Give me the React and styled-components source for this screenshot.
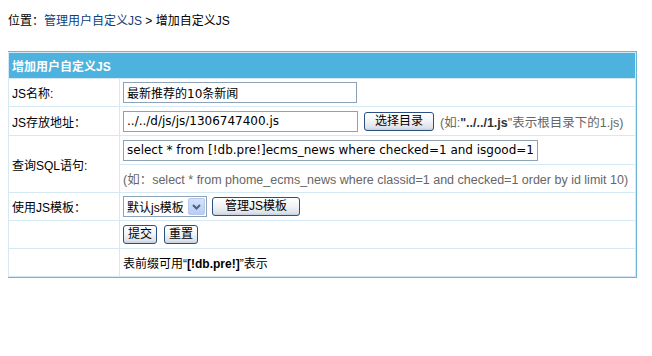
import React from 'react'
import styled, { createGlobalStyle } from 'styled-components'

const GlobalStyle = createGlobalStyle`
  body {
    margin: 8px;
    background: #fff;
    color: #000;
    font: 12px 'Liberation Sans', 'Noto Sans CJK SC', sans-serif;
    text-autospace: no-autospace;
  }
`

const Breadcrumb = styled.div`
  height: 26px;
  line-height: 26px;
  margin-bottom: 17px;
`

const Link = styled.a`
  color: #0d3f7a;
  text-decoration: none;
`

const Panel = styled.div`
  box-sizing: border-box;
  width: 630px;
  margin-left: -1px;
  border: 1px solid #6db5d6;
  padding: 1px;
  background: #d5e9f4;
  display: grid;
  grid-template-columns: 110px 1fr;
  grid-template-rows: 25px 27px 28px 28px 27px 27px 27px 27px;
  gap: 1px;
`

const Header = styled.div`
  grid-column: 1 / span 2;
  background: #4db2dd;
  color: #fff;
  font-weight: bold;
  display: flex;
  align-items: center;
  padding-left: 3px;
`

const Label = styled.div`
  background: #fff;
  display: flex;
  align-items: center;
  padding-left: 3px;
  grid-row: ${({ span }) => (span ? `span ${span}` : 'auto')};
`

const Cell = styled.div`
  background: #fff;
  display: flex;
  align-items: center;
  gap: ${({ gap }) => gap || 6}px;
  padding-left: 3px;
  white-space: nowrap;
`

const TextInput = styled.input`
  box-sizing: border-box;
  width: ${({ w }) => w}px;
  height: 21px;
  border: 1px solid #8da2b7;
  padding: 0 3px;
  font: 12px 'DejaVu Sans', 'Noto Sans CJK SC', sans-serif;
  color: #000;
  outline: none;
`

const Button = styled.button`
  box-sizing: border-box;
  height: 19px;
  padding: 0 ${({ pad }) => pad || 5}px;
  border: 1px solid #2b4f80;
  border-radius: 3px;
  background: linear-gradient(180deg, #ffffff 0%, #f3f4f6 45%, #dde3ec 85%, #c5cfdd 100%);
  font: 12px 'Liberation Sans', 'Noto Sans CJK SC', sans-serif;
  color: #000;
  line-height: 17px;
  cursor: pointer;
`

const Hint = styled.span`
  color: #666;
  font-size: 12.5px;
  white-space: nowrap;
  b {
    color: #333;
  }
`

const Note = styled.span`
  white-space: nowrap;
`

const SelectBox = styled.div`
  box-sizing: border-box;
  width: 84px;
  height: 21px;
  border: 1px solid #8da2b7;
  display: flex;
  align-items: stretch;
  background: #fff;
`

const SelectText = styled.span`
  flex: 1;
  display: flex;
  align-items: center;
  padding-left: 3px;
  font-size: 12px;
  white-space: nowrap;
  overflow: hidden;
`

const SelectArrow = styled.span`
  flex: none;
  width: 15px;
  margin: 1px;
  border-radius: 2px;
  background: linear-gradient(180deg, #d6e2fb 0%, #b9ccf4 100%);
  border: 1px solid #b6c8ee;
  display: flex;
  align-items: center;
  justify-content: center;
`

const Arrow = () => (
  <svg width="9" height="6" viewBox="0 0 9 6">
    <path d="M1 1 L4.5 4.5 L8 1" fill="none" stroke="#4d6185" strokeWidth="2" />
  </svg>
)

export default function App() {
  return (
    <>
      <GlobalStyle />
      <Breadcrumb>
        位置：<Link href="#">管理用户自定义JS</Link> &gt; 增加自定义JS
      </Breadcrumb>
      <Panel>
        <Header>增加用户自定义JS</Header>

        <Label>JS名称:</Label>
        <Cell>
          <TextInput w={234} defaultValue="最新推荐的10条新闻" />
        </Cell>

        <Label>JS存放地址：</Label>
        <Cell>
          <TextInput w={235} defaultValue="../../d/js/js/1306747400.js" />
          <Button pad={10}>选择目录</Button>
          <Hint>
            (如:<b>"../../1.js</b>"表示根目录下的1.js)
          </Hint>
        </Cell>

        <Label span={2}>查询SQL语句:</Label>
        <Cell>
          <TextInput w={415} defaultValue="select * from [!db.pre!]ecms_news where checked=1 and isgood=1" />
        </Cell>
        <Cell>
          <Hint>(如：select * from phome_ecms_news where classid=1 and checked=1 order by id limit 10)</Hint>
        </Cell>

        <Label>使用JS模板：</Label>
        <Cell gap={5}>
          <SelectBox>
            <SelectText>默认js模板</SelectText>
            <SelectArrow>
              <Arrow />
            </SelectArrow>
          </SelectBox>
          <Button pad={12}>管理JS模板</Button>
        </Cell>

        <Label />
        <Cell gap={7}>
          <Button pad={4}>提交</Button>
          <Button pad={4}>重置</Button>
        </Cell>

        <Label />
        <Cell>
          <Note>
            表前缀可用“<b>[!db.pre!]</b>”表示
          </Note>
        </Cell>
      </Panel>
    </>
  )
}
